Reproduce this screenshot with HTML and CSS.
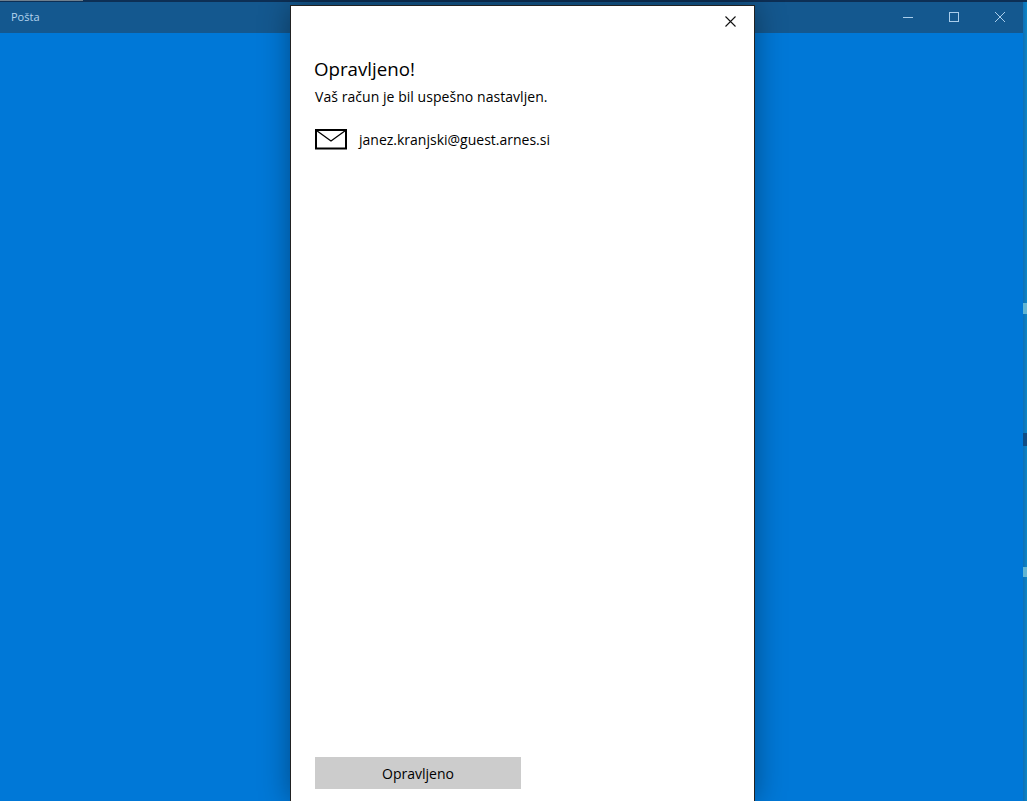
FILE: index.html
```html
<!DOCTYPE html>
<html lang="sl">
<head>
<meta charset="utf-8">
<title>Pošta</title>
<link rel="stylesheet" href="styles.css">
</head>
<body>
<div class="desk">
  <div class="top-strip"><span class="strip-bits"></span></div>
  <div class="window">
    <header class="titlebar">
      <span class="app-name">Pošta</span>
      <div class="controls">
        <svg class="ctl" width="46" height="31" viewBox="0 0 46 31"><path d="M18 15.5h10" stroke="#a9cdeb" stroke-width="1" fill="none"/></svg>
        <svg class="ctl" width="46" height="31" viewBox="0 0 46 31"><rect x="18.5" y="10.5" width="9" height="9" stroke="#a9cdeb" stroke-width="1" fill="none"/></svg>
        <svg class="ctl" width="46" height="31" viewBox="0 0 46 31"><path d="M18 10l10 10M28 10l-10 10" stroke="#a9cdeb" stroke-width="1" fill="none"/></svg>
      </div>
    </header>
    <main class="body-area"></main>
  </div>
  <div class="edge"><i class="mark mark-a"></i><i class="mark mark-b"></i><i class="mark mark-c"></i></div>
  <section class="dialog">
    <div class="dialog-top">
      <svg class="close" width="11" height="11" viewBox="0 0 11 11"><path d="M.5.5l10 10M10.500.5l-10 10" stroke="#111" stroke-width="1.100" fill="none"/></svg>
    </div>
    <div class="dialog-content">
      <h1 class="heading">Opravljeno!</h1>
      <p class="lead">Vaš račun je bil uspešno nastavljen.</p>
      <div class="account">
        <svg class="mail" width="32" height="21" viewBox="0 0 32 21"><rect x="1" y="1" width="30" height="18.500" fill="none" stroke="#000" stroke-width="2"/><path d="M1.500 1.500l14.500 10.500 14.500-10.500" fill="none" stroke="#000" stroke-width="1.300"/></svg>
        <span class="address">janez.kranjski@guest.arnes.si</span>
      </div>
    </div>
    <div class="dialog-actions"><button class="done" type="button">Opravljeno</button></div>
  </section>
</div>
</body>
</html>
```
FILE: styles.css
```css
* { box-sizing: border-box; }
html, body { margin: 0; height: 801px; overflow: hidden; }
body { font-family: "Open Sans", "Noto Sans", "Liberation Sans", sans-serif; background: #0078d7; }
.desk { position: relative; width: 1027px; height: 801px; display: flex; flex-direction: column; overflow: hidden; }
.top-strip { height: 2px; background: #0d2f55; flex: none; }
.strip-bits { display: block; width: 83px; height: 1px; background: #6f7f8e; }
.window { flex: 1; display: flex; flex-direction: column; }
.titlebar { height: 31px; flex: none; background: #14588f; display: flex; align-items: center; justify-content: space-between; }
.app-name { margin-left: 11px; margin-top: -2px; font-size: 11px; color: #b4d4ee; }
.controls { display: flex; margin-right: 4px; }
.ctl { display: block; }
.body-area { flex: 1; background: #0078d7; }
.edge { position: absolute; top: 2px; right: 0; bottom: 0; width: 4px; background: linear-gradient(90deg, #0f6fb5, #0a86c8); }
.mark { position: absolute; left: 0; right: 0; display: block; }
.mark-a { top: 301px; height: 11px; background: #5fb4d3; }
.mark-b { top: 431px; height: 13px; background: #0f4d85; }
.mark-c { top: 565px; height: 10px; background: #5fb4d3; }
.dialog { position: absolute; left: 290px; top: 5px; width: 465px; height: 796px; background: #fff; border: 1px solid #222; border-bottom: 0; box-shadow: 0 0 28px rgba(0, 0, 0, .38); display: flex; flex-direction: column; }
.dialog-top { height: 30px; flex: none; display: flex; justify-content: flex-end; align-items: flex-start; padding: 10px 18px 0 0; }
.close { display: block; }
.dialog-content { flex: 1; padding: 20px 24px 0 23px; color: #000; }
.heading { margin: 0; font-size: 18.700px; line-height: 26px; font-weight: 400; }
.lead { margin: 6px 0 0; padding-left: 1px; font-size: 14px; line-height: 18px; letter-spacing: .05px; }
.account { margin-top: 23px; padding-left: 1px; display: flex; align-items: center; gap: 12px; height: 21px; }
.mail { display: block; flex: none; }
.address { font-size: 14px; line-height: 18px; }
.dialog-actions { flex: none; padding: 0 24px 12px; }
.done { display: block; width: 206px; height: 32px; padding: 0; border: 0; background: #ccc; color: #000; font: inherit; font-size: 14px; }
```
